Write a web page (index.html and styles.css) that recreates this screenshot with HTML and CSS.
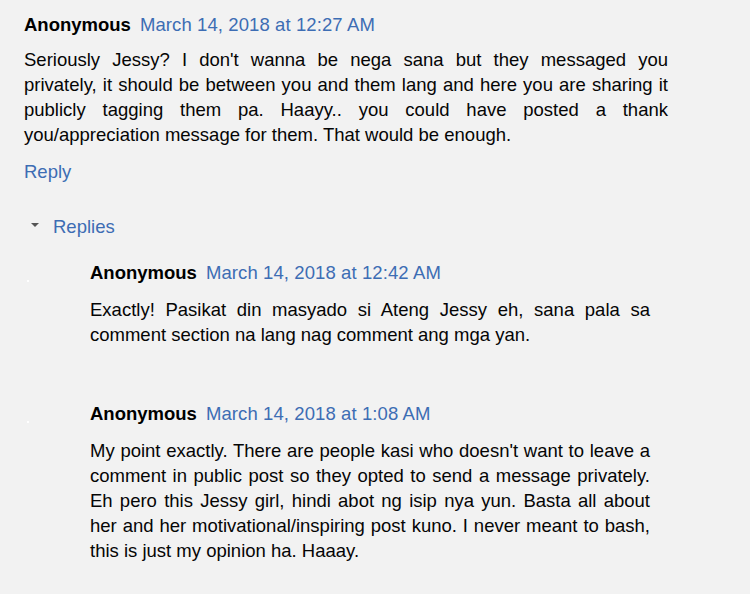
FILE: index.html
```html
<!DOCTYPE html>
<html>
<head>
<meta charset="utf-8">
<link rel="stylesheet" href="styles.css">
</head>
<body>
<div class="thread">
  <div class="comment">
    <div class="head"><span class="author">Anonymous</span><a class="date">March 14, 2018 at 12:27 AM</a></div>
    <p class="body">Seriously Jessy? I don't wanna be nega sana but they messaged you privately, it should be between you and them lang and here you are sharing it publicly tagging them pa. Haayy.. you could have posted a thank you/appreciation message for them. That would be enough.</p>
    <div class="actions"><a class="link">Reply</a></div>
  </div>
  <div class="toggle"><span class="tri"></span><a class="link">Replies</a></div>
  <div class="replies">
    <div class="reply">
      <div class="avatar"><span class="dot"></span></div>
      <div class="content">
        <div class="head"><span class="author">Anonymous</span><a class="date">March 14, 2018 at 12:42 AM</a></div>
        <p class="body">Exactly! Pasikat din masyado si Ateng Jessy eh, sana pala sa comment section na lang nag comment ang mga yan.</p>
      </div>
    </div>
    <div class="reply">
      <div class="avatar"><span class="dot"></span></div>
      <div class="content">
        <div class="head"><span class="author">Anonymous</span><a class="date">March 14, 2018 at 1:08 AM</a></div>
        <p class="body">My point exactly. There are people kasi who doesn't want to leave a comment in public post so they opted to send a message privately. Eh pero this Jessy girl, hindi abot ng isip nya yun. Basta all about her and her motivational/inspiring post kuno. I never meant to bash, this is just my opinion ha. Haaay.</p>
      </div>
    </div>
  </div>
</div>
</body>
</html>
```

FILE: styles.css
```css
html, body {
  margin: 0;
  padding: 0;
  background: #f2f2f2;
}
body {
  font-family: "Liberation Sans", Arial, sans-serif;
  font-size: 18.5px;
  line-height: 25px;
  color: #050505;
  width: 750px;
  height: 594px;
  overflow: hidden;
}
.thread {
  padding: 12px 82px 0 24px;
}
.head {
  display: flex;
  align-items: baseline;
}
.author {
  font-weight: bold;
  color: #000;
}
.date {
  margin-left: 9px;
  color: #3d6db4;
  letter-spacing: 0.1px;
}
.link {
  color: #3d6db4;
}
.body {
  margin: 10px 0 0 0;
  text-align: justify;
}
.actions {
  margin-top: 12px;
}
.toggle {
  margin-top: 30px;
  display: flex;
  align-items: center;
  padding-left: 7px;
}
.tri {
  width: 0;
  height: 0;
  border-left: 4px solid transparent;
  border-right: 4px solid transparent;
  border-top: 4px solid #555;
  margin-right: 14px;
  margin-top: -3px;
}
.replies {
  margin-top: 21px;
}
.reply {
  display: flex;
}
.reply + .reply {
  margin-top: 54px;
}
.avatar {
  width: 66px;
  flex: none;
}
.dot {
  display: block;
  width: 2px;
  height: 2px;
  background: #fff;
  margin: 20px 0 0 3px;
}
.content {
  width: 560px;
}
.content .body {
  margin-top: 12px;
}
```
